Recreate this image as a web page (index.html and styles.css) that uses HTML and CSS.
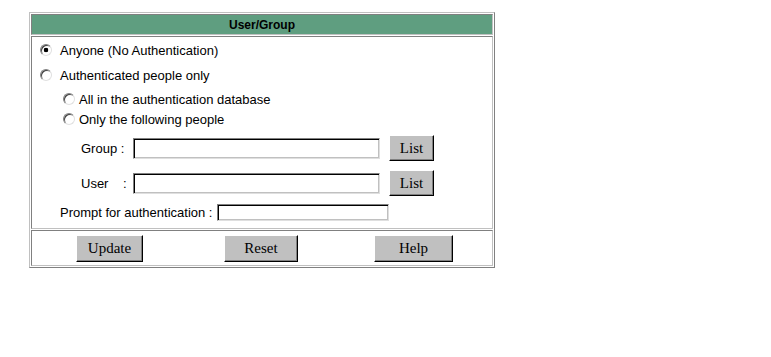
FILE: index.html
```html
<!DOCTYPE html>
<html lang="en">
<head>
  <meta charset="UTF-8" />
  <title>User/Group</title>
  <link rel="stylesheet" href="styles.css">
</head>
<body>
  <form class="auth-form">
    <table class="panel">
      <tr>
        <th class="panel-title">User/Group</th>
      </tr>
      <tr>
        <td class="panel-body">
          <label class="option">
            <input type="radio" name="auth" value="anyone" checked>
            Anyone (No Authentication)
          </label>
          <label class="option option-gap">
            <input type="radio" name="auth" value="authenticated">
            Authenticated people only
          </label>
          <div class="sub-options">
            <label class="option">
              <input type="radio" name="who" value="all">
              All in the authentication database
            </label>
            <label class="option">
              <input type="radio" name="who" value="only">
              Only the following people
            </label>
          </div>
          <div class="field-row field-first">
            <span class="field-label">Group&nbsp;:</span>
            <input type="text" class="text-input">
            <button type="button" class="btn btn-list">List</button>
          </div>
          <div class="field-row">
            <span class="field-label">User&nbsp;&nbsp;&nbsp;&nbsp;:</span>
            <input type="text" class="text-input">
            <button type="button" class="btn btn-list">List</button>
          </div>
          <div class="prompt-row">
            <span>Prompt for authentication :</span>
            <input type="text" class="text-input prompt-input">
          </div>
        </td>
      </tr>
      <tr>
        <td class="panel-actions">
          <div class="actions">
            <button type="button" class="btn btn-update">Update</button>
            <button type="reset" class="btn btn-reset">Reset</button>
            <button type="button" class="btn btn-help">Help</button>
          </div>
        </td>
      </tr>
    </table>
  </form>
</body>
</html>
```

FILE: styles.css
```css
html, body {
  margin: 0;
  padding: 0;
}

body {
  background: #fff;
  font-family: 'Liberation Sans', Arial, sans-serif;
  font-size: 13px;
  color: #000;
}

.auth-form {
  margin: 0;
  padding: 12px 0 0 29px;
}

.panel {
  width: 466px;
  border-collapse: separate;
  border-spacing: 1px;
  border: 1px solid;
  border-color: #c0c0c0 #808080 #808080 #c0c0c0;
}

.panel th,
.panel td {
  border: 1px solid;
  border-color: #808080 #c0c0c0 #c0c0c0 #808080;
  padding: 0;
}

.panel .panel-title {
  height: 19px;
  background: #5f9e80;
  font-size: 12px;
  font-weight: bold;
  text-align: center;
}

.panel .panel-body {
  height: 188px;
  vertical-align: top;
  padding-top: 3px;
}

.option {
  display: flex;
  align-items: center;
  gap: 8px;
  height: 20px;
  margin-left: 8px;
}

.option-gap {
  margin-top: 5px;
}

.sub-options {
  margin: 4px 0 0 23px;
}

.sub-options .option {
  gap: 4px;
}

.option input {
  appearance: none;
  -webkit-appearance: none;
  box-sizing: border-box;
  width: 12px;
  height: 12px;
  margin: 0;
  border: 1px solid;
  border-color: #808080 #e0e0e0 #e0e0e0 #808080;
  border-radius: 50%;
  background: #fff;
  box-shadow: inset 1px 1px 0 #404040;
}

.option input:checked {
  background: radial-gradient(circle, #000 0, #000 2px, #fff 2.6px);
}

.field-row {
  display: flex;
  align-items: center;
  height: 26px;
  margin: 9px 0 0 49px;
}

.field-first {
  margin-top: 6px;
}

.field-label {
  width: 52px;
  white-space: nowrap;
}

.text-input {
  box-sizing: border-box;
  width: 247px;
  height: 21px;
  margin: 0;
  padding: 0 2px;
  border: 1px solid;
  border-color: #808080 #dfdfdf #dfdfdf #808080;
  box-shadow: inset 1px 1px 0 #000, inset -1px -1px 0 #c0c0c0;
  font-family: 'Liberation Sans', Arial, sans-serif;
  font-size: 13px;
  outline: none;
}

.prompt-row {
  display: flex;
  align-items: center;
  gap: 5px;
  height: 17px;
  margin: 8px 0 0 28px;
}

.prompt-input {
  width: 172px;
  height: 17px;
}

.btn {
  box-sizing: border-box;
  margin: 0;
  padding: 0;
  background: #c0c0c0;
  border: 1px solid;
  border-color: #fff #000 #000 #fff;
  box-shadow: inset -1px -1px 0 #808080;
  font-family: 'Liberation Serif', 'Times New Roman', serif;
  font-size: 15px;
  color: #000;
  cursor: pointer;
}

.btn-list {
  width: 45px;
  height: 26px;
  margin-left: 9px;
}

.panel-actions {
  height: 34px;
}

.actions {
  display: grid;
  grid-template-columns: 155px 148px 157px;
  justify-items: center;
  align-items: center;
}

.actions .btn {
  height: 27px;
}

.btn-update {
  width: 67px;
}

.btn-reset {
  width: 74px;
}

.btn-help {
  width: 79px;
}
```
